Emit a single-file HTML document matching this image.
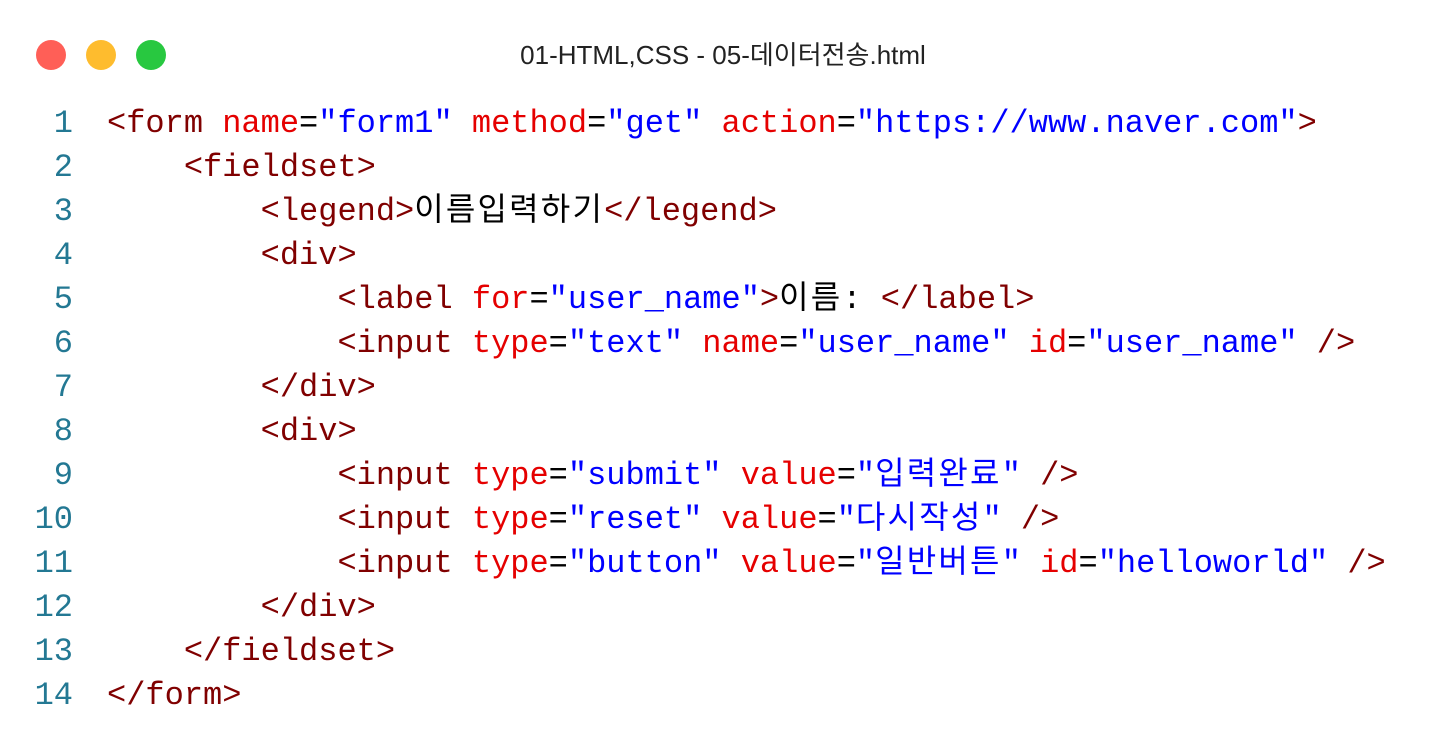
<!DOCTYPE html>
<html><head><meta charset="utf-8"><style>
body{margin:0;width:1446px;height:752px;background:#fff;overflow:hidden;position:relative}
.d{position:absolute;top:40px;width:30px;height:30px;border-radius:50%}
.t{position:absolute;top:38px;left:0;width:1446px;text-align:center;font:26px/34px "Liberation Sans","Noto Sans CJK KR",sans-serif;color:#222}
pre{position:absolute;left:0;top:102px;margin:0;font:32px/44px "Liberation Mono","Noto Sans CJK KR",monospace;color:#000}
.n{display:inline-block;width:73px;text-align:right;color:#237893;margin-right:34px}
.g{color:#800000}.a{color:#e50000}.v{color:#0000ff}
.k{letter-spacing:2.2px}
</style></head><body>
<div class="d" style="left:36px;background:#ff5f57"></div>
<div class="d" style="left:86px;background:#febc2e"></div>
<div class="d" style="left:136px;background:#28c840"></div>
<div class="t">01-HTML,CSS - 05-데이터전송.html</div>
<pre><span class="n">1</span><span class="g">&lt;form</span> <span class="a">name</span>=<span class="v">"form1"</span> <span class="a">method</span>=<span class="v">"get"</span> <span class="a">action</span>=<span class="v">"https://www.naver.com"</span><span class="g">&gt;</span>
<span class="n">2</span>    <span class="g">&lt;fieldset&gt;</span>
<span class="n">3</span>        <span class="g">&lt;legend&gt;</span><span class="k">이름입력하기</span><span class="g">&lt;/legend&gt;</span>
<span class="n">4</span>        <span class="g">&lt;div&gt;</span>
<span class="n">5</span>            <span class="g">&lt;label</span> <span class="a">for</span>=<span class="v">"user_name"</span><span class="g">&gt;</span><span class="k">이름</span>: <span class="g">&lt;/label&gt;</span>
<span class="n">6</span>            <span class="g">&lt;input</span> <span class="a">type</span>=<span class="v">"text"</span> <span class="a">name</span>=<span class="v">"user_name"</span> <span class="a">id</span>=<span class="v">"user_name"</span> <span class="g">/&gt;</span>
<span class="n">7</span>        <span class="g">&lt;/div&gt;</span>
<span class="n">8</span>        <span class="g">&lt;div&gt;</span>
<span class="n">9</span>            <span class="g">&lt;input</span> <span class="a">type</span>=<span class="v">"submit"</span> <span class="a">value</span>=<span class="v">"<span class="k">입력완료</span>"</span> <span class="g">/&gt;</span>
<span class="n">10</span>            <span class="g">&lt;input</span> <span class="a">type</span>=<span class="v">"reset"</span> <span class="a">value</span>=<span class="v">"<span class="k">다시작성</span>"</span> <span class="g">/&gt;</span>
<span class="n">11</span>            <span class="g">&lt;input</span> <span class="a">type</span>=<span class="v">"button"</span> <span class="a">value</span>=<span class="v">"<span class="k">일반버튼</span>"</span> <span class="a">id</span>=<span class="v">"helloworld"</span> <span class="g">/&gt;</span>
<span class="n">12</span>        <span class="g">&lt;/div&gt;</span>
<span class="n">13</span>    <span class="g">&lt;/fieldset&gt;</span>
<span class="n">14</span><span class="g">&lt;/form&gt;</span></pre>
</body></html>
